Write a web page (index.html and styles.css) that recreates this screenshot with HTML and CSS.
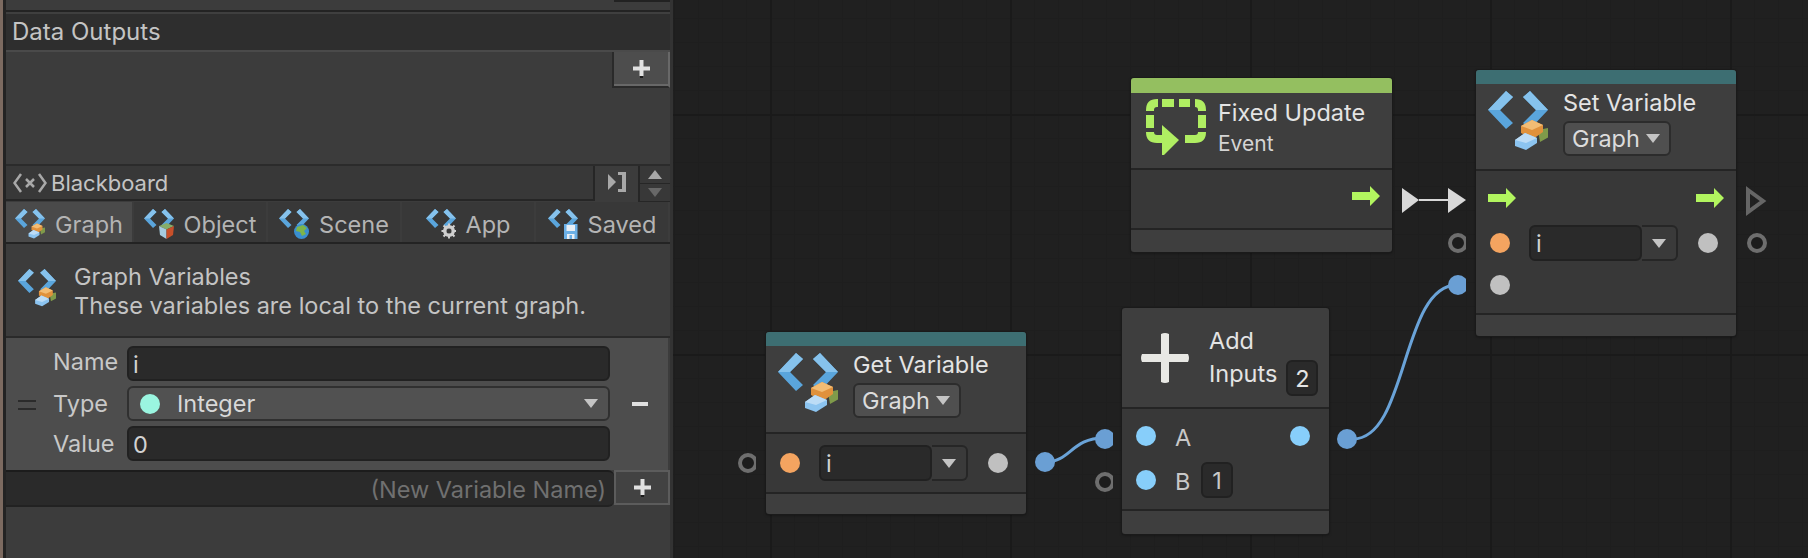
FILE: index.html
```html
<!DOCTYPE html>
<html lang="en">
<head>
    <meta charset="UTF-8">
    <title>Graph Variables</title>
    <link rel="stylesheet" href="styles.css">
</head>
<body>
    <!-- shared icons -->
    <svg class="defs" aria-hidden="true">
        <defs>
            <g id="chevrons">
                <path fill="#5aa5dc" d="M18 0 L25 6 L12 19 L25 32 L18 38 L0 19Z"/>
                <path fill="#5aa5dc" d="M42 0 L60 19 L42 38 L35 32 L48 19 L35 6Z"/>
                <path fill="#86c2ec" d="M18 0 L25 6 L12 19 L7 19 L0 19Z"/>
                <path fill="#86c2ec" d="M42 0 L60 19 L53 19 L48 19 L35 6Z"/>
            </g>
            <symbol id="icon-graph" viewBox="0 0 60 60">
                <use href="#chevrons"/>
                <path fill="#7f9a4a" d="M50 39 L60 37 L61 46 L52 51Z"/>
                <path fill="#e0913c" d="M33 35 L44 29 L55 34 L55 41 L45 48 L33 42Z"/>
                <path fill="#f2bc74" d="M33 35 L44 29 L55 34 L44 39Z"/>
                <path fill="#8cc4f0" d="M27 49 L37 42 L49 47 L49 52 L38 59 L27 55Z"/>
                <path fill="#bcdcf6" d="M27 49 L37 42 L49 47 L38 52Z"/>
            </symbol>
            <symbol id="icon-object" viewBox="0 0 60 60">
                <use href="#chevrons"/>
                <path fill="#86ad6a" d="M30 34 L45 28 L60 34 L45 41Z"/>
                <path fill="#a6cce0" d="M30 34 L45 41 L45 60 L32 52Z"/>
                <path fill="#c8502a" d="M60 34 L45 41 L45 60 L58 52Z"/>
            </symbol>
            <symbol id="icon-scene" viewBox="0 0 60 60">
                <use href="#chevrons"/>
                <circle cx="45" cy="45" r="15" fill="#3a8fd0"/>
                <path fill="#7db54a" d="M36 36 L48 32 L56 38 L50 44 L54 50 L46 54 L42 46 L34 44Z"/>
            </symbol>
            <symbol id="icon-app" viewBox="0 0 60 60">
                <use href="#chevrons"/>
                <circle cx="46" cy="44" r="9" fill="none" stroke="#cfcfcf" stroke-width="6"/>
                <path stroke="#cfcfcf" stroke-width="4" d="M46 29 V59 M31 44 H61 M35 33 L57 55 M57 33 L35 55"/>
                <circle cx="46" cy="44" r="5" fill="#3a3a3a"/>
            </symbol>
            <symbol id="icon-saved" viewBox="0 0 60 60">
                <use href="#chevrons"/>
                <path fill="#6cb0e6" d="M32 30 H59 V60 H32Z"/>
                <path fill="#e8eef4" d="M37 32 H54 V44 H37Z M38 50 H53 V60 H38Z"/>
                <path fill="#6cb0e6" d="M43 52 H48 V60 H43Z"/>
            </symbol>
            <symbol id="icon-plus" viewBox="0 0 17 18">
                <path fill="#1c1c1c" d="M7 15 H10 V18 H7Z"/>
                <path fill="#e0e0e0" d="M6.5 0 H10.5 V6.5 H17 V10.5 H10.5 V16 H6.5 V10.5 H0 V6.5 H6.5Z"/>
            </symbol>
            <symbol id="icon-flow" viewBox="0 0 28 20">
                <path fill="#b2f55f" d="M0 6 H18 V0 L28 10 L18 20 V14 H0Z"/>
            </symbol>
        </defs>
    </svg>

    <div class="app">
        <aside class="panel">
            <div class="panel-top"><span class="top-btn"></span></div>
            <div class="list-head">Data Outputs</div>
            <div class="list-empty">
                <div class="add-btn"><svg class="plus"><use href="#icon-plus"/></svg></div>
            </div>

            <div class="bb-bar">
                <div class="bb-title">
                    <svg class="bb-icon" viewBox="0 0 34 20">
                        <path fill="none" stroke="#a8a8a8" stroke-width="2.5" d="M8 1 L1.5 10 L8 19 M26 1 L32.5 10 L26 19"/>
                        <path fill="none" stroke="#a8a8a8" stroke-width="2.5" d="M13 6 L21 14 M21 6 L13 14"/>
                    </svg>
                    <span>Blackboard</span>
                </div>
                <div class="bb-toggle">
                    <svg class="toggle-icon" viewBox="0 0 18 20">
                        <path fill="#a8a8a8" d="M0 2 L8 10 L0 18Z M10 0 H18 V20 H10 V17 H14 V3 H10Z"/>
                    </svg>
                </div>
                <div class="bb-scroll">
                    <div class="scroll-btn"><span class="tri-up"></span></div>
                    <div class="scroll-btn"><span class="tri-down"></span></div>
                </div>
            </div>

            <div class="tabs">
                <div class="tab active"><svg class="tab-icon"><use href="#icon-graph"/></svg>Graph</div>
                <div class="tab"><svg class="tab-icon"><use href="#icon-object"/></svg>Object</div>
                <div class="tab"><svg class="tab-icon"><use href="#icon-scene"/></svg>Scene</div>
                <div class="tab"><svg class="tab-icon"><use href="#icon-app"/></svg>App</div>
                <div class="tab"><svg class="tab-icon"><use href="#icon-saved"/></svg>Saved</div>
            </div>

            <div class="scope">
                <svg class="scope-icon"><use href="#icon-graph"/></svg>
                <div>
                    <div class="scope-title">Graph Variables</div>
                    <div class="scope-text">These variables are local to the current graph.</div>
                </div>
            </div>

            <div class="var-row">
                <div class="handle"></div>
                <div class="var-fields">
                    <div class="var-line"><label class="name-label">Name</label><div class="input">i</div></div>
                    <div class="var-line">
                        <label>Type</label>
                        <div class="select"><span class="type-dot"></span>Integer<span class="tri-down light push"></span></div>
                    </div>
                    <div class="var-line"><label>Value</label><div class="input">0</div></div>
                </div>
                <div class="minus"></div>
            </div>

            <div class="new-var">
                <div class="new-input">(New Variable Name)</div>
                <div class="add-btn new-add"><svg class="plus"><use href="#icon-plus"/></svg></div>
            </div>
        </aside>

        <main class="canvas">
            <svg class="wires" viewBox="0 0 1135 558">
                <path d="M372 462 C398 462 398 438 431 438" />
                <path d="M680 439 C735 439 728 285 784 285" />
                <path class="flow-line" d="M746 200 H775" />
                <path class="flow-tri" d="M729 188 L746 200 L729 213Z" />
                <path class="flow-tri" d="M775 188 L793 200 L775 213Z" />
                <path class="flow-empty" d="M1075 190 L1090 201 L1075 212Z" />
            </svg>

            <span class="port hollow clip p-get-in"></span>
            <span class="port blue p-get-out"></span>
            <span class="port blue clip p-add-a"></span>
            <span class="port hollow clip p-add-b"></span>
            <span class="port blue p-add-out"></span>
            <span class="port hollow clip p-set-in"></span>
            <span class="port blue clip p-set-val"></span>
            <span class="port hollow p-set-out"></span>

            <!-- Get Variable -->
            <section class="node n-get">
                <div class="node-bar teal"></div>
                <div class="node-head">
                    <svg class="node-icon"><use href="#icon-graph"/></svg>
                    <div>
                        <div class="node-title">Get Variable</div>
                        <div class="scope-select">Graph<span class="tri-down light"></span></div>
                    </div>
                </div>
                <div class="node-body">
                    <div class="value-row">
                        <span class="dot orange"></span>
                        <div class="combo"><div class="combo-text">i</div><div class="combo-arrow"><span class="tri-down light"></span></div></div>
                        <span class="dot grey"></span>
                    </div>
                </div>
                <div class="node-foot"></div>
            </section>

            <!-- Add Inputs -->
            <section class="node n-add">
                <div class="node-head">
                    <svg class="add-icon" viewBox="0 0 50 50">
                        <path fill="#e8e8e4" d="M21 1 Q25 -1 29 1 V21 H48 Q50 25 48 29 H29 V49 Q25 51 21 49 V29 H2 Q0 25 2 21 H21Z"/>
                    </svg>
                    <div class="add-text">
                        <div class="node-title">Add</div>
                        <div class="add-inputs"><div class="node-title">Inputs</div><div class="num-box">2</div></div>
                    </div>
                </div>
                <div class="node-body add-body">
                    <div class="add-row"><span class="dot sky"></span><span class="add-letter">A</span><span class="dot sky out"></span></div>
                    <div class="add-row"><span class="dot sky"></span><span class="add-letter">B</span><div class="num-box">1</div></div>
                </div>
                <div class="node-foot"></div>
            </section>

            <!-- Fixed Update -->
            <section class="node n-fixed">
                <div class="node-bar green"></div>
                <div class="node-head">
                    <svg class="event-icon" viewBox="0 0 60 56">
                        <g fill="none" stroke="#b0ee62" stroke-width="8">
                            <path d="M4 12 V11 Q4 4 11 4 H12"/>
                            <path d="M16 4 H28 M33 4 H44"/>
                            <path d="M49 4 Q56 4 56 11 V12"/>
                            <path d="M4 16 V29 M56 16 V29"/>
                            <path d="M56 33 Q56 40 49 40 H39"/>
                            <path d="M4 33 Q4 40 11 40 H20"/>
                        </g>
                        <path fill="#b0ee62" d="M16 26 L33 41 L18 56 L16 56Z"/>
                    </svg>
                    <div>
                        <div class="node-title">Fixed Update</div>
                        <div class="node-sub">Event</div>
                    </div>
                </div>
                <div class="node-body flow-body">
                    <div class="flow-row end"><svg class="flow-arrow"><use href="#icon-flow"/></svg></div>
                </div>
                <div class="node-foot"></div>
            </section>

            <!-- Set Variable -->
            <section class="node n-set">
                <div class="node-bar teal"></div>
                <div class="node-head">
                    <svg class="node-icon"><use href="#icon-graph"/></svg>
                    <div>
                        <div class="node-title">Set Variable</div>
                        <div class="scope-select">Graph<span class="tri-down light"></span></div>
                    </div>
                </div>
                <div class="node-body flow-body">
                    <div class="flow-row">
                        <svg class="flow-arrow"><use href="#icon-flow"/></svg>
                        <svg class="flow-arrow"><use href="#icon-flow"/></svg>
                    </div>
                    <div class="value-row set-value">
                        <span class="dot orange"></span>
                        <div class="combo"><div class="combo-text">i</div><div class="combo-arrow"><span class="tri-down light"></span></div></div>
                        <span class="dot grey"></span>
                    </div>
                    <div class="value-row set-last"><span class="dot grey"></span></div>
                </div>
                <div class="node-foot"></div>
            </section>
        </main>
    </div>
</body>
</html>
```

FILE: styles.css
```css
* {
    box-sizing: border-box;
}

html, body {
    margin: 0;
    height: 100%;
    overflow: hidden;
}

body {
    font-family: "Inter", "Liberation Sans", sans-serif;
    font-size: 23.5px;
    background-color: #202020;
    color: #c4c4c4;
}

.defs {
    position: absolute;
    width: 0;
    height: 0;
}

.app {
    display: flex;
    width: 1808px;
    height: 558px;
}

/* Left panel */
.panel {
    width: 673px;
    height: 558px;
    flex: none;
    padding-left: 3px;
    padding-right: 3px;
    background-color: #3c3c3c;
    border-left: 3px solid #7c6a60;
    display: flex;
    flex-direction: column;
    box-shadow: inset 3px 0 0 #232323, inset -3px 0 0 #333;
}

.panel-top {
    height: 10px;
    display: flex;
    justify-content: flex-end;
}

.top-btn {
    width: 56px;
    height: 2px;
    background-color: #222;
}

.list-head {
    height: 42px;
    line-height: 34px;
    padding-left: 6px;
    padding-top: 3px;
    background-color: #2e2e2e;
    border-top: 2px solid #232323;
    border-bottom: 2px solid #4a4a4a;
    box-shadow: inset 0 2px 0 #3f3f3f;
    font-size: 24px;
}

.list-empty {
    height: 112px;
    display: flex;
    justify-content: flex-end;
    align-items: flex-start;
}

.add-btn {
    width: 58px;
    height: 36px;
    flex: none;
    background-color: #4d4d4d;
    border-left: 2px solid #2a2a2a;
    border-right: 2px solid #686868;
    border-bottom: 2px solid #2a2a2a;
    box-shadow: inset 0 -2px 0 #686868;
    display: flex;
    align-items: center;
    justify-content: center;
}

.plus {
    width: 17px;
    height: 18px;
}

.bb-bar {
    height: 38px;
    display: flex;
    border-top: 2px solid #2b2b2b;
}

.bb-title {
    width: 589px;
    height: 35px;
    display: flex;
    align-items: center;
    gap: 4px;
    padding-left: 7px;
    background-color: #383838;
    border-bottom: 2px solid #262626;
    border-right: 2px solid #262626;
    font-size: 22px;
}

.bb-icon {
    width: 34px;
    height: 20px;
}

.bb-toggle {
    width: 43px;
    display: flex;
    justify-content: center;
    padding-top: 6px;
}

.toggle-icon {
    width: 18px;
    height: 20px;
}

.bb-scroll {
    width: 32px;
    border-left: 2px solid #262626;
}

.scroll-btn {
    height: 18px;
    display: flex;
    align-items: center;
    justify-content: center;
    background-color: #383838;
    border-bottom: 1px solid #262626;
}

.tri-up {
    width: 0;
    height: 0;
    border-left: 7px solid transparent;
    border-right: 7px solid transparent;
    border-bottom: 9px solid #a8a8a8;
}

.tri-down {
    display: inline-block;
    width: 0;
    height: 0;
    border-left: 7px solid transparent;
    border-right: 7px solid transparent;
    border-top: 9px solid #686868;
}

.tri-down.light {
    border-top-color: #c4c4c4;
}

.tabs {
    display: flex;
    gap: 2px;
    height: 42px;
    border-bottom: 2px solid #232323;
}

.tab {
    width: 132px;
    height: 40px;
    padding-top: 4px;
    background-color: #383838;
    display: flex;
    align-items: center;
    justify-content: center;
    gap: 10px;
    color: #b4b4b4;
}

.tab.active {
    width: 126px;
    background-color: #4a4a4a;
}

.tab-icon {
    width: 30px;
    height: 30px;
}

.scope {
    height: 94px;
    display: flex;
    gap: 18px;
    padding: 18px 0 0 12px;
    border-bottom: 2px solid #2a2a2a;
}

.scope-icon {
    width: 38px;
    height: 38px;
    margin-top: 7px;
}

.scope-title, .scope-text {
    line-height: 29px;
    white-space: nowrap;
}

.var-row {
    height: 132px;
    display: flex;
    padding: 8px 0 0 12px;
    background-color: #4d4d4d;
    border-right: 2px solid #3c3c3c;
}

.handle {
    width: 18px;
    height: 10px;
    margin-top: 54px;
    border-top: 2px solid #2b2b2b;
    border-bottom: 2px solid #2b2b2b;
}

.var-fields {
    width: 557px;
    margin-left: 17px;
    display: flex;
    flex-direction: column;
    gap: 5px;
}

.var-line {
    display: flex;
    align-items: center;
    height: 35px;
}

.var-line label {
    width: 74px;
    flex: none;
    color: #c8c8c8;
}

.var-line .name-label {
    margin-top: -4px;
}

.input {
    flex: 1;
    height: 35px;
    line-height: 33px;
    padding-left: 4px;
    background-color: #2a2a2a;
    border: 2px solid #212121;
    border-radius: 6px;
    color: #d2d2d2;
}

.select {
    flex: 1;
    height: 35px;
    display: flex;
    align-items: center;
    padding: 0 10px 0 11px;
    background-color: #515151;
    border: 2px solid #303030;
    border-radius: 6px;
    color: #d8d8d8;
}

.type-dot {
    width: 20px;
    height: 20px;
    margin-right: 17px;
    border-radius: 50%;
    background-color: #9af5e0;
}

.push {
    margin-left: auto;
}

.minus {
    width: 16px;
    height: 4px;
    margin: 56px 0 0 22px;
    background-color: #e0e0e0;
}

.new-var {
    display: flex;
    height: 37px;
}

.new-input {
    flex: 1;
    height: 37px;
    line-height: 35px;
    text-align: right;
    padding-right: 8px;
    background-color: #2a2a2a;
    border-top: 2px solid #1c1c1c;
    border-bottom: 2px solid #222;
    border-radius: 0 6px 6px 0;
    color: #707070;
}

.new-add {
    width: 56px;
    height: 35px;
    background-color: #424242;
    border: 2px solid #5c5c5c;
    box-shadow: none;
}

/* Graph canvas */
.canvas {
    position: relative;
    flex: 1;
    height: 558px;
    background-color: #202020;
    background-image:
        linear-gradient(to right, #1a1a1a 2px, transparent 2px),
        linear-gradient(to bottom, #1a1a1a 2px, transparent 2px),
        linear-gradient(to right, #1e1e1e 1px, transparent 1px),
        linear-gradient(to bottom, #1e1e1e 1px, transparent 1px);
    background-size: 240px 240px, 240px 240px, 24px 24px, 24px 24px;
    background-position: 97px 0, 0 114px, 1px 0, 0 18px;
    overflow: hidden;
}

.wires {
    position: absolute;
    left: 0;
    top: 0;
    width: 1135px;
    height: 558px;
}

.wires path {
    fill: none;
    stroke: #6aa3d8;
    stroke-width: 3;
}

.wires .flow-line {
    stroke: #d8d8d8;
    stroke-width: 2;
}

.wires .flow-tri {
    fill: #d8d8d8;
    stroke: none;
}

.wires .flow-empty {
    stroke: #666;
    stroke-width: 4;
}

.port {
    position: absolute;
    width: 20px;
    height: 20px;
    border-radius: 50%;
}

.port.blue {
    background-color: #6a9fd4;
}

.port.hollow {
    background-color: #1c1c1c;
    border: 4px solid #6e6e6e;
}

.port.clip {
    clip-path: inset(0 2px 0 0);
}

.p-get-in { left: 65px; top: 453px; }
.p-get-out { left: 362px; top: 452px; }
.p-add-a { left: 422px; top: 429px; }
.p-add-b { left: 422px; top: 472px; }
.p-add-out { left: 664px; top: 429px; }
.p-set-in { left: 775px; top: 233px; }
.p-set-val { left: 775px; top: 275px; }
.p-set-out { left: 1074px; top: 233px; }

/* Nodes */
.node {
    position: absolute;
    display: flex;
    flex-direction: column;
    background-color: #3e3e3e;
    border-radius: 3px;
    box-shadow: 0 0 0 1px #1a1a1a, 0 1px 3px rgba(0, 0, 0, 0.5);
    color: #e4e4e4;
}

.n-get { left: 93px; top: 332px; width: 260px; height: 182px; }
.n-add { left: 449px; top: 308px; width: 207px; height: 226px; }
.n-fixed { left: 458px; top: 78px; width: 261px; height: 174px; }
.n-set { left: 803px; top: 70px; width: 260px; height: 266px; }

.node-bar {
    height: 14px;
    flex: none;
    border-radius: 3px 3px 0 0;
}

.node-bar.teal {
    background-color: #3d6e72;
}

.node-bar.green {
    height: 15px;
    background-color: #94bf60;
}

.node-head {
    height: 86px;
    flex: none;
    display: flex;
    gap: 15px;
    padding: 7px 0 0 12px;
}

.n-set .node-head {
    height: 85px;
}

.n-fixed .node-head {
    height: 75px;
    padding: 6px 0 0 15px;
    gap: 12px;
}

.n-add .node-head {
    height: 99px;
    padding: 25px 0 0 18px;
    gap: 19px;
}

.node-icon {
    width: 60px;
    height: 60px;
}

.event-icon {
    width: 60px;
    height: 56px;
}

.add-icon {
    width: 50px;
    height: 50px;
}

.node-title {
    margin-top: -2px;
    line-height: 28px;
    white-space: nowrap;
}

.n-fixed .node-title {
    margin-top: 0;
}

.node-sub {
    margin-top: 5px;
    font-size: 21px;
    line-height: 24px;
    color: #d4d4d4;
}

.scope-select {
    width: 108px;
    height: 35px;
    margin-top: 4px;
    display: flex;
    align-items: center;
    gap: 6px;
    padding-left: 7px;
    background-color: #4f4f4f;
    border: 2px solid #2c2c2c;
    border-radius: 6px;
    color: #dcdcdc;
}

.node-body {
    flex: none;
    height: 62px;
    background-color: #383838;
    border-top: 2px solid #242424;
    border-bottom: 2px solid #242424;
}

.n-set .node-body {
    height: 146px;
}

.node-foot {
    flex: 1;
}

.value-row {
    display: flex;
    align-items: center;
    height: 36px;
    margin-top: 11px;
    padding-left: 14px;
}

.dot {
    width: 20px;
    height: 20px;
    flex: none;
    border-radius: 50%;
}

.dot.orange { background-color: #f4a460; }
.dot.grey { background-color: #c0c0c0; }
.dot.sky { background-color: #87cefa; }

.combo {
    width: 149px;
    height: 36px;
    display: flex;
    margin: 0 20px 0 19px;
    color: #d2d2d2;
}

.combo-text {
    width: 113px;
    line-height: 34px;
    padding-left: 5px;
    background-color: #2a2a2a;
    border: 2px solid #212121;
    border-radius: 6px;
}

.combo-arrow {
    flex: 1;
    display: flex;
    align-items: center;
    justify-content: center;
    background-color: #3a3a3a;
    border: 2px solid #262626;
    border-left: 0;
    border-radius: 0 6px 6px 0;
}

.flow-body {
    padding-top: 16px;
}

.n-set .flow-body {
    padding-top: 17px;
}

.flow-row {
    display: flex;
    justify-content: space-between;
    padding: 0 12px;
}

.flow-row.end {
    justify-content: flex-end;
}

.flow-arrow {
    width: 28px;
    height: 20px;
    display: block;
}

.set-value {
    margin-top: 17px;
}

.set-last {
    height: 20px;
    margin-top: 14px;
}

.add-text {
    margin-top: -4px;
}

.add-inputs {
    display: flex;
    gap: 9px;
    margin-top: 5px;
}

.add-inputs .node-title {
    margin-top: 0;
}

.num-box {
    width: 32px;
    height: 36px;
    line-height: 34px;
    text-align: center;
    background-color: #2a2a2a;
    border: 2px solid #212121;
    border-radius: 6px;
}

.n-add .node-body {
    height: 104px;
    padding-top: 9px;
}

.add-row {
    display: flex;
    align-items: center;
    height: 36px;
    padding: 0 19px 0 14px;
    margin-bottom: 8px;
    color: #c8c8c8;
}

.add-letter {
    width: 26px;
    margin-left: 19px;
    padding-top: 3px;
}

.dot.out {
    margin-left: auto;
}
```
